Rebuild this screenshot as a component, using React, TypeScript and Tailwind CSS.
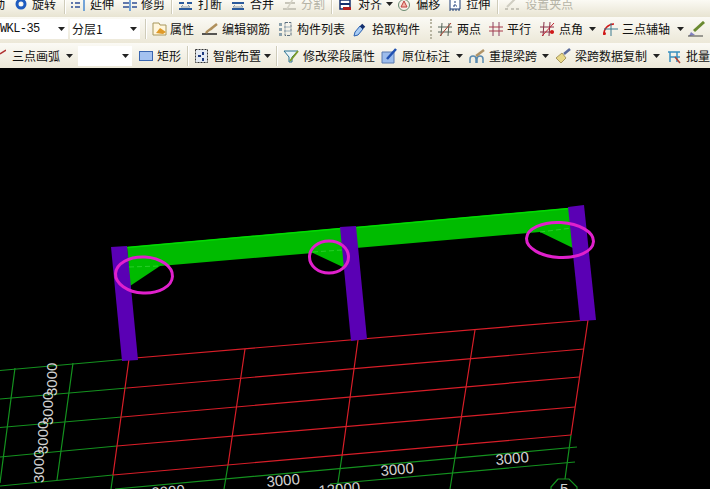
import type { ReactNode } from "react";

const Caret = ({ className = "" }: { className?: string }) => (
  <svg width="7" height="4" viewBox="0 0 7 4" className={`shrink-0 ${className}`}>
    <path d="M0 0h7L3.5 4z" fill="#222" />
  </svg>
);

const Sep = ({ className = "" }: { className?: string }) => (
  <div className={`h-[20px] w-[2px] shrink-0 border-l border-[#cfccba] bg-white ${className}`} />
);

function Tool({ icon, label, gap = "ml-1", off = false, className = "" }: { icon: ReactNode; label: string; gap?: string; off?: boolean; className?: string }) {
  return (
    <div className={`flex shrink-0 items-center ${className}`}>
      {icon}
      <span className={`${gap} whitespace-nowrap text-[12px] leading-none ${off ? "text-[#b5b3a6]" : "text-[#111]"}`}>{label}</span>
    </div>
  );
}

const Ico = ({ children, w = 16 }: { children: ReactNode; w?: number }) => (
  <svg width={w} height="16" viewBox={`0 0 ${w} 16`} fill="none" className="shrink-0">
    {children}
  </svg>
);

function Combo({ text, width, mono = false }: { text: string; width: string; mono?: boolean }) {
  return (
    <div className={`flex h-[20px] shrink-0 items-center justify-between bg-white pr-[3px] ${width}`}>
      <span className={`whitespace-nowrap text-[12px] text-[#111] ${mono ? "font-['Liberation_Mono'] tracking-[-0.6px]" : "pl-[2px]"}`}>{text}</span>
      <Caret />
    </div>
  );
}

// [x, y] at the left and right end of each red grid row
const rows = [
  [129, 358.5, 588, 320],
  [127, 388, 584, 349],
  [122, 417, 579, 377],
  [117, 446, 575, 407],
  [113, 475, 571, 435],
];

function Drawing() {
  return (
    <svg viewBox="0 69 710 420" className="h-[420px] w-[710px]" fontFamily="'Liberation Sans', sans-serif">
      {/* green axis lines */}
      <g stroke="#14921f" strokeWidth="1.200" fill="none">
        <path d="M0 370.500L129 359M0 399L127 388M0 427.500L122 417M0 457L117 446M0 486L113 475" />
        <path d="M15 368L0 483M73 363L57 480M113 475L111 489M228 465L224 489M342 456L337 489M457 445L450 489M571 435L565 479" />
        <path d="M115 489L577 447M330 484L575 462" />
        <path d="M558 479L569 479L577 487L577 489M558 479L551 487L551 489" />
      </g>
      {/* red grid */}
      <g stroke="#d81e28" strokeWidth="1.200" fill="none">
        {rows.map(([x1, y1, x2, y2]) => (
          <line key={y1} x1={x1} y1={y1} x2={x2} y2={y2} />
        ))}
        <path d="M129 359L113 475M245 349L228 465M358 340L342 456M475 330L457 445M588 320L571 435" />
      </g>
      {/* beams */}
      <polygon points="127,247 341,228 345,268 313,253 160,266 130,286" fill="#00bb00" />
      <polygon points="356,227 569,208 573,248 540,232 356,248" fill="#00bb00" />
      <path d="M127 247.500L341 228.500M356 227.500L569 208.500" stroke="#00dc00" strokeWidth="1.500" />
      <path d="M129 267L160 266M313 252L342 250M540 232L572 228" stroke="#33d233" strokeWidth="0.800" strokeDasharray="5 3" />
      {/* columns */}
      <g fill="#5a00b4">
        <polygon points="111,247 127,246 138,360 122,361" />
        <polygon points="340,227 356,226 367,339 351,341" />
        <polygon points="568,207 584,205 596,320 580,321" />
      </g>
      {/* markup */}
      <g stroke="#e020cc" strokeWidth="3" fill="none">
        <ellipse cx="144" cy="275" rx="28.500" ry="18" transform="rotate(3 144 275)" />
        <ellipse cx="329" cy="257" rx="19.500" ry="16" />
        <ellipse cx="560" cy="240" rx="33.500" ry="17.500" transform="rotate(3 560 240)" />
      </g>
      {/* dimensions */}
      <g fill="#d2d2d2" fontSize="15">
        <text transform="translate(57 396) rotate(-90)">3000</text>
        <text transform="translate(52.500 425) rotate(-90)">3000</text>
        <text transform="translate(48 454) rotate(-90)">3000</text>
        <text transform="translate(44 483) rotate(-90)">3000</text>
        <text transform="translate(152 498) rotate(-5)">3000</text>
        <text transform="translate(267 487) rotate(-5)">3000</text>
        <text transform="translate(381 476) rotate(-5)">3000</text>
        <text transform="translate(496 465) rotate(-5)">3000</text>
        <text transform="translate(319 496) rotate(-5)">12000</text>
        <text x="560" y="494">5</text>
      </g>
    </svg>
  );
}

export default function App() {
  return (
    <div className="flex h-[489px] w-[710px] flex-col overflow-hidden bg-black font-['Noto_Sans_CJK_SC',sans-serif]">
      <div className="flex h-[68px] shrink-0 flex-col overflow-hidden bg-[#f3f1e7]">
        {/* row 1, cut off by the window edge */}
        <div className="flex h-[17px] shrink-0 items-start overflow-hidden whitespace-nowrap bg-gradient-to-b from-[#fbfaf4] to-[#e8e4d2]">
          <div className="mt-[-6px] flex h-[20px] items-center">
            <span className="ml-[-7px] text-[12px] leading-none text-[#111]">动</span>
            <Tool
              className="ml-[10px]"
              gap="ml-[5px]"
              label="旋转"
              icon={<Ico w={12}><circle cx="6" cy="8" r="4" stroke="#1f5cc0" strokeWidth="3" /><path d="M6 7v3" stroke="#fff" strokeWidth="1.500" /></Ico>}
            />
            <Sep className="ml-[8px]" />
            <Tool className="ml-[5px]" label="延伸" icon={<Ico w={15}><path d="M0 7h2M4 7h5M0 11h2M4 11h5" stroke="#2f4f96" strokeWidth="1.500" /><path d="M13 1v14" stroke="#4a8ad0" strokeWidth="1.500" /></Ico>} />
            <Tool className="ml-[8px]" gap="ml-[3px]" label="修剪" icon={<Ico w={16}><path d="M1 7h6M10 7h5M1 11h6M10 11h5" stroke="#2f4f96" strokeWidth="1.500" /><path d="M8 1v14" stroke="#4a8ad0" strokeWidth="1.500" /></Ico>} />
            <Sep className="ml-[6px]" />
            <Tool className="ml-[5px]" gap="ml-[5px]" label="打断" icon={<Ico w={15}><path d="M1 7h5M9 7h5M1 13h13" stroke="#2a5a9c" strokeWidth="2" /><path d="M5 9l-2 2h9l-2-2" stroke="#8a9aa8" /></Ico>} />
            <Tool className="ml-[8px]" label="合并" icon={<Ico w={16}><path d="M2 7h12M2 13h12" stroke="#2a5a9c" strokeWidth="2" /><path d="M5 9l-2 2h10l-2-2" stroke="#8a9aa8" /></Ico>} />
            <Tool className="ml-[8px]" off label="分割" icon={<Ico w={15}><path d="M1 13h13M3 7h10" stroke="#c8c6ba" strokeWidth="2" /><path d="M11 3L5 13" stroke="#d4d2c6" strokeWidth="1.500" /></Ico>} />
            <Sep className="ml-[6px]" />
            <Tool className="ml-[6px]" gap="ml-[7px]" label="对齐" icon={<Ico w={12}><path d="M1 4h10v9H1z" stroke="#14306e" strokeWidth="1.500" fill="#fff" /><path d="M1 8h10" stroke="#14306e" strokeWidth="2" /><path d="M4 11h8v3H4z" fill="#b02020" /></Ico>} />
            <Caret className="ml-[4px]" />
            <Tool className="ml-[4px]" gap="ml-[5px]" label="偏移" icon={<Ico w={14}><circle cx="7" cy="9" r="5.500" stroke="#6a8a70" fill="#f6efe6" /><path d="M7 5l-3 6h6z" stroke="#c04040" fill="#f0b8a8" /></Ico>} />
            <Tool className="ml-[8px]" label="拉伸" icon={<Ico w={14}><path d="M2 1h7l3 3v9H2z" stroke="#1c3c78" fill="#fff" /><path d="M7 5v5M5 10h4M1 14h12" stroke="#1c3c78" strokeDasharray="2 1" /></Ico>} />
            <Sep className="ml-[7px]" />
            <Tool className="ml-[5px]" gap="ml-[5px]" off label="设置夹点" icon={<Ico w={16}><path d="M3 11L13 1" stroke="#d0cec2" strokeWidth="2" /><path d="M1 13h3M7 13h3M12 13h3" stroke="#b8b6aa" strokeWidth="1.500" /></Ico>} />
          </div>
        </div>

        {/* row 2 */}
        <div className="flex h-[26px] shrink-0 items-center whitespace-nowrap bg-gradient-to-b from-[#fbfaf5] to-[#ece8d8] pb-[2px]">
          <Combo mono text="WKL-35" width="w-[68px]" />
          <div className="ml-[2px]"><Combo text="分层1" width="w-[70px]" /></div>
          <Sep className="ml-[5px]" />
          <Tool className="ml-[5px]" gap="ml-[3px]" label="属性" icon={<Ico w={15}><path d="M1 2h6l1 2h6v10H1z" stroke="#a8975c" fill="#fff6dc" /><path d="M4 12l4-5 6 4-3 2z" fill="#e09a28" /></Ico>} />
          <Tool className="ml-[8px]" label="编辑钢筋" icon={<Ico w={16}><path d="M0 13h15" stroke="#222" strokeWidth="1.500" /><path d="M4 12c2-3 4-3 6-5l5-4" stroke="#b0905c" strokeWidth="2.500" /></Ico>} />
          <Tool className="ml-[8px]" gap="ml-[5px]" label="构件列表" icon={<Ico w={14}><path d="M1 2h3v3H1zM1 7h3v3H1zM1 12h3v3H1z" fill="#8aa0ac" /><path d="M7 1.500h6v13H7z" stroke="#5d7080" strokeDasharray="3 1" /><path d="M7 6h6M7 10h6" stroke="#9eb0bc" /></Ico>} />
          <Tool className="ml-[8px]" gap="ml-[6px]" label="拾取构件" icon={<Ico w={13}><path d="M1 15l1-4 5-6 3 3-5 6z" stroke="#2a60b0" fill="#a8ccf4" /><path d="M8 4l3 3" stroke="#14306e" strokeWidth="3.500" /></Ico>} />
          <div className="ml-[10px] h-[20px] w-[2px] shrink-0 border-l-2 border-dotted border-[#b8b5a2]" />
          <Tool className="ml-[6px]" gap="ml-[5px]" label="两点" icon={<Ico w={14}><path d="M4 2L3 15M11 2L10 15M0 6h14M0 11h14" stroke="#55655a" /><path d="M2 15L13 2" stroke="#a84030" /></Ico>} />
          <Tool className="ml-[8px]" label="平行" icon={<Ico w={14}><path d="M4 1v14M10 1v14" stroke="#8a4060" /><path d="M0 6h14M0 10h14" stroke="#a83848" /></Ico>} />
          <Tool className="ml-[9px]" label="点角" icon={<Ico w={15}><path d="M4 1L3 15M10 1L9 15M0 6h14M0 11h14" stroke="#8a3048" /><path d="M2 15L14 2" stroke="#c02030" /><circle cx="12" cy="11" r="2" fill="#d01818" /></Ico>} />
          <Caret className="ml-[6px]" />
          <Tool className="ml-[6px]" label="三点辅轴" icon={<Ico w={16}><path d="M2 14a10 10 0 0 1 10-11" stroke="#d01818" strokeWidth="1.500" /><circle cx="2.500" cy="12.500" r="1.500" fill="#d01818" /><path d="M9 2v13M2 8h14" stroke="#3a7a90" /></Ico>} />
          <Caret className="ml-[7px]" />
          <Tool className="ml-[4px]" label="" icon={<Ico w={18}><path d="M6 10L16 1" stroke="#6a8a30" strokeWidth="3" /><path d="M3 11l4 3-6 1z" fill="#8080c0" /><path d="M0 15h15" stroke="#444" /></Ico>} />
        </div>

        {/* row 3 */}
        <div className="flex h-[25px] shrink-0 items-center whitespace-nowrap bg-gradient-to-b from-[#fbfaf5] to-[#ece8d8] pt-[1px]">
          <Tool gap="ml-[6px]" label="三点画弧" icon={<Ico w={6}><path d="M0 6L6 2" stroke="#b03030" strokeWidth="1.500" /></Ico>} />
          <Caret className="ml-[6px]" />
          <div className="ml-[5px]"><Combo text="" width="w-[54px]" /></div>
          <Tool className="ml-[7px]" gap="ml-[4px]" label="矩形" icon={<Ico w={14}><rect x="0.500" y="3.500" width="13" height="9" fill="#a4c2f0" stroke="#3a66b0" /></Ico>} />
          <Sep className="ml-[6px]" />
          <Tool className="ml-[5px]" gap="ml-[4px]" label="智能布置" icon={<Ico w={15}><path d="M1.500 1.500h12v13h-12z" stroke="#333" strokeDasharray="2 1" fill="#e4eaf2" /><path d="M4 8h3M9 4v3M9 10v3" stroke="#1e3a80" strokeWidth="2" /></Ico>} />
          <Caret className="ml-[3px]" />
          <Sep className="ml-[5px]" />
          <Tool className="ml-[5px]" label="修改梁段属性" icon={<Ico w={16}><path d="M1 3h14L9 9v5H6V9z" stroke="#2a7090" fill="#e8f4f8" /><path d="M7 13L15 3" stroke="#7a9a2a" strokeWidth="2" /></Ico>} />
          <Tool className="ml-[6px]" gap="ml-[5px]" label="原位标注" icon={<Ico w={16}><path d="M1 4h12v11H1z" fill="#9cbcec" stroke="#5a7ab0" /><path d="M6 11L15 1" stroke="#2050b0" strokeWidth="2.500" /></Ico>} />
          <Caret className="ml-[6px]" />
          <Tool className="ml-[6px]" gap="ml-[4px]" label="重提梁跨" icon={<Ico w={16}><path d="M1 15v-4a3 3 0 0 1 6 0v4M8 15v-4a3 3 0 0 1 6 0v4" stroke="#5a8ab0" strokeWidth="1.500" /><path d="M7 8L15 2" stroke="#b09468" strokeWidth="2.500" /></Ico>} />
          <Caret className="ml-[5px]" />
          <Tool className="ml-[6px]" gap="ml-[4px]" label="梁跨数据复制" icon={<Ico w={16}><path d="M1 10l6-5 4 5-5 5z" fill="#e8d888" stroke="#a89860" /><path d="M9 6l6-5" stroke="#5a6a9a" strokeWidth="2.500" /></Ico>} />
          <Caret className="ml-[6px]" />
          <Tool className="ml-[7px]" gap="ml-[5px]" label="批量" icon={<Ico w={14}><path d="M1 4h12M3 9h10M3 4v10M10 4v10" stroke="#3a90c0" strokeWidth="1.500" /><path d="M8 9l5 6" stroke="#b04030" strokeWidth="1.500" /></Ico>} />
        </div>
      </div>
      <div className="h-px shrink-0 bg-black" />
      <Drawing />
    </div>
  );
}
